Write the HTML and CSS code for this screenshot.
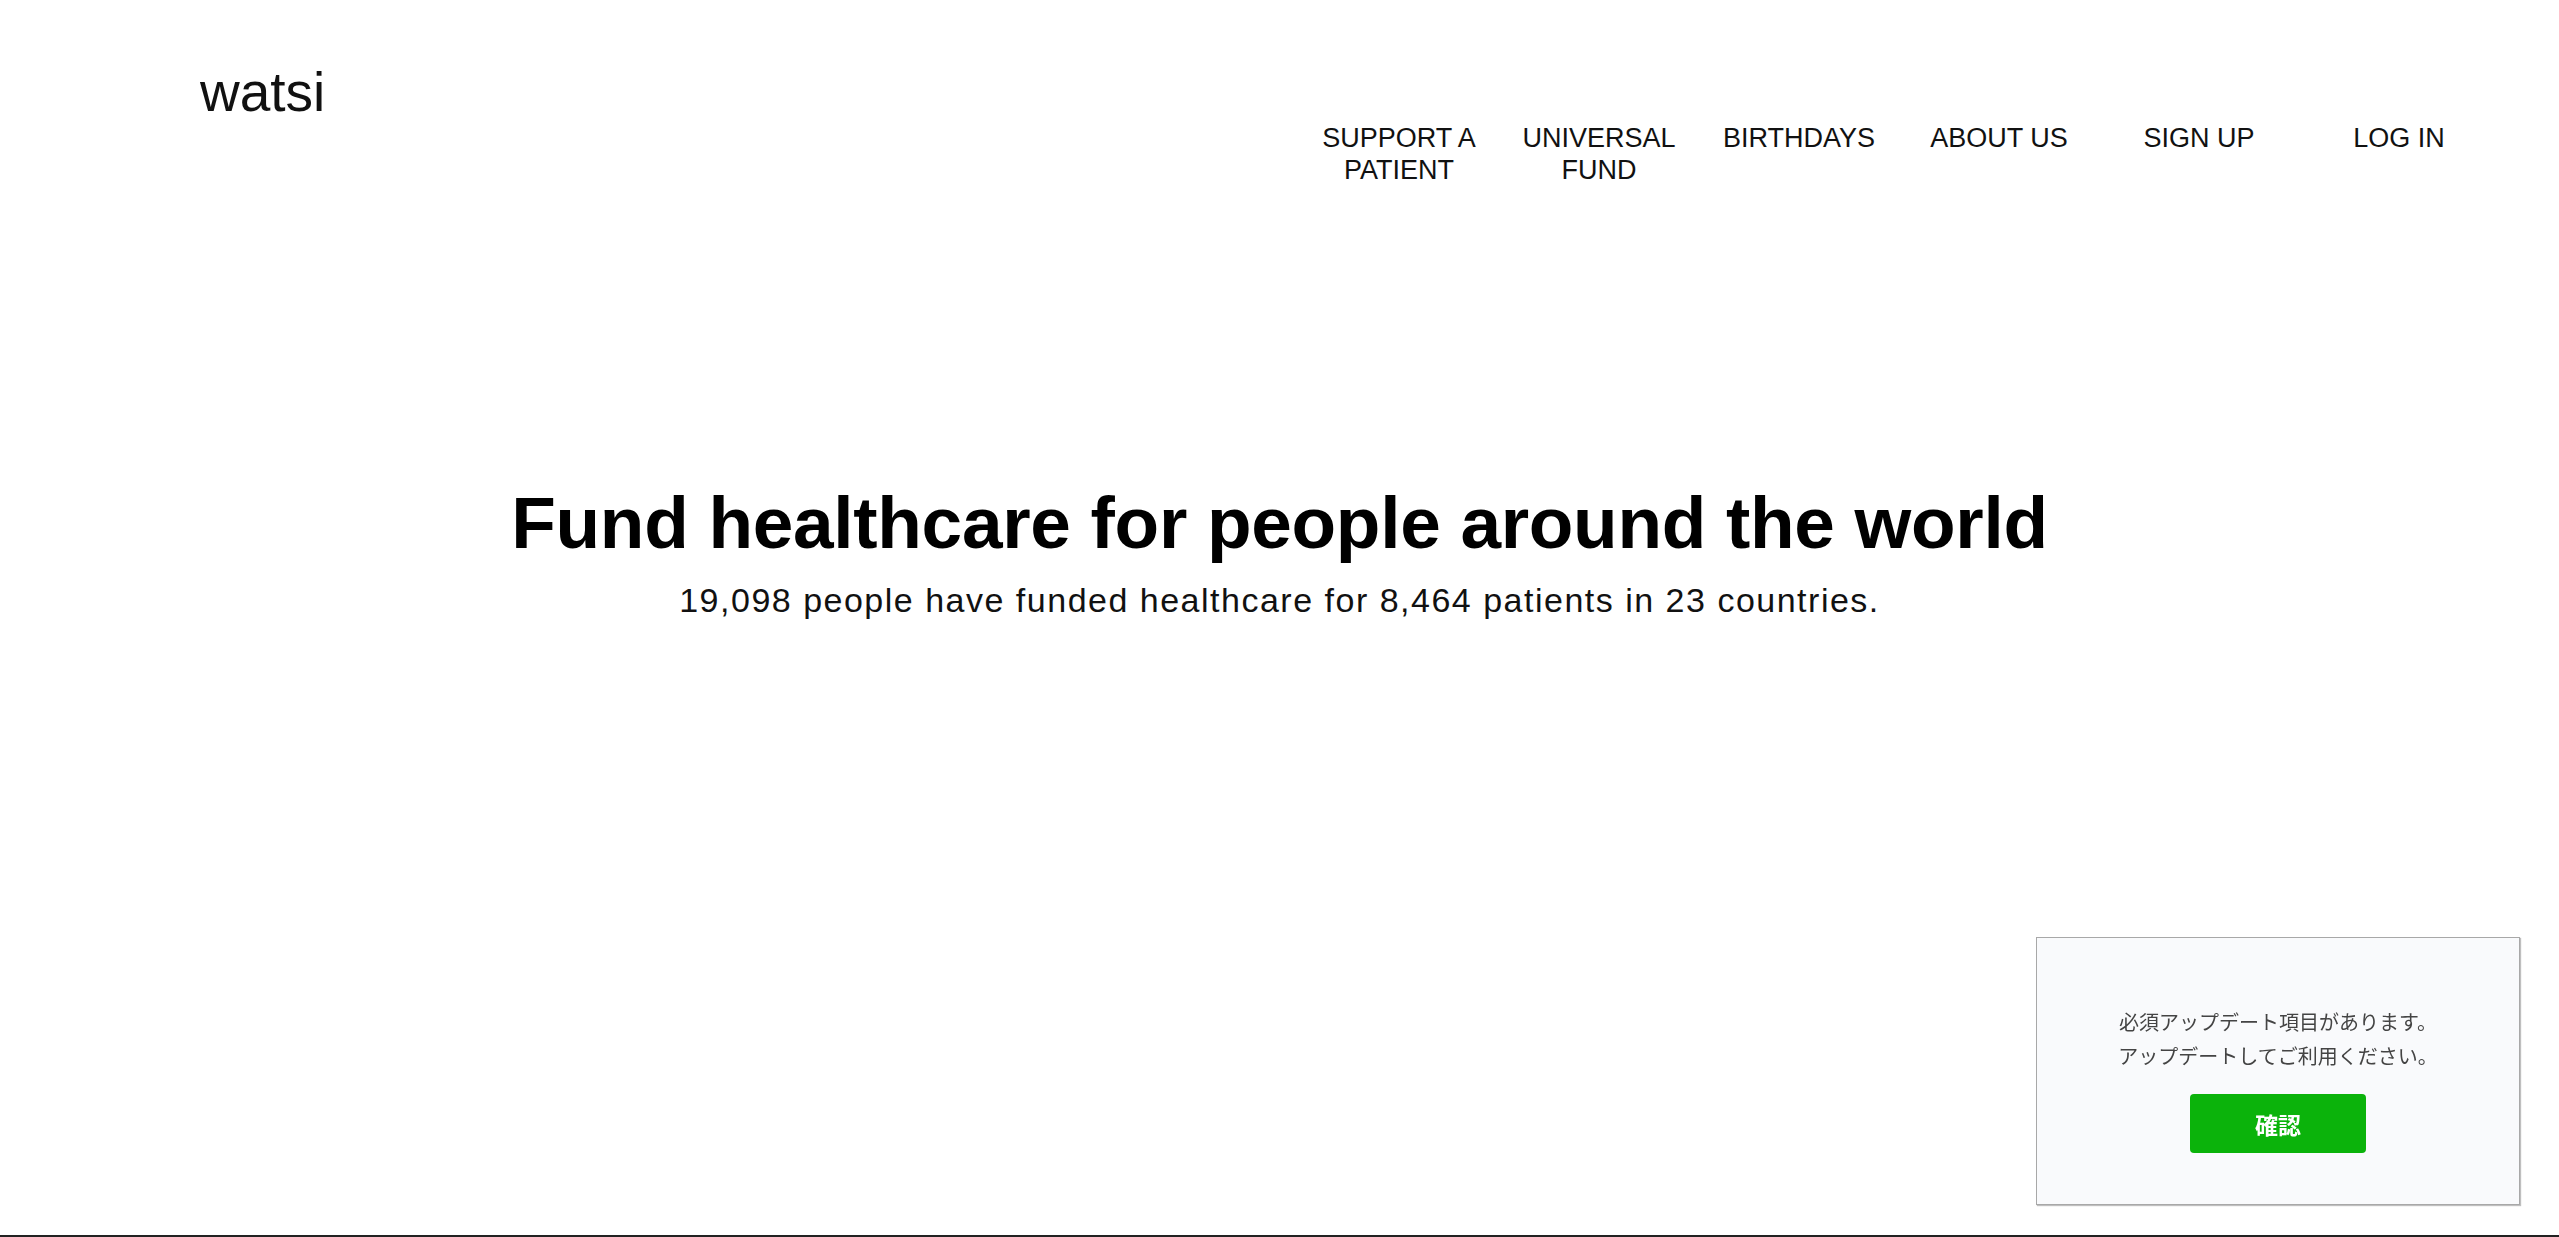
FILE: index.html
```html
<!DOCTYPE html>
<html lang="en">
<head>
<meta charset="utf-8">
<title>Watsi</title>
<link rel="stylesheet" href="styles.css">
</head>
<body>
<div class="top">
  <header class="header">
    <a class="logo" href="#">watsi</a>
    <nav class="nav">
      <a class="nav-item" href="#">SUPPORT A PATIENT</a>
      <a class="nav-item" href="#">UNIVERSAL FUND</a>
      <a class="nav-item" href="#">BIRTHDAYS</a>
      <a class="nav-item" href="#">ABOUT US</a>
      <a class="nav-item" href="#">SIGN UP</a>
      <a class="nav-item" href="#">LOG IN</a>
    </nav>
  </header>
  <section class="hero">
    <h1 class="hero-title">Fund healthcare for people around the world</h1>
    <p class="hero-sub">19,098 people have funded healthcare for 8,464 patients in 23 countries.</p>
  </section>
</div>
<section class="dark"></section>

<div class="update-box">
  <p class="update-text">必須アップデート項目があります。<br>アップデートしてご利用ください。</p>
  <button class="update-btn" type="button">確認</button>
</div>
</body>
</html>
```
FILE: styles.css
```css
html, body {
  margin: 0;
  padding: 0;
  background: #ffffff;
}
body {
  font-family: "Liberation Sans", Arial, sans-serif;
  color: #111111;
}
.top {
  height: 1235px;
  box-sizing: border-box;
}
.header {
  display: flex;
  justify-content: space-between;
  align-items: flex-start;
  padding: 66px 60px 0 200px;
}
.logo {
  font-size: 55px;
  line-height: 52px;
  color: #111111;
  text-decoration: none;
}
.nav {
  display: flex;
  padding-top: 56px;
}
.nav-item {
  width: 200px;
  box-sizing: border-box;
  padding: 0 10px;
  text-align: center;
  font-size: 27px;
  line-height: 32px;
  color: #111111;
  text-decoration: none;
}
.hero {
  padding-top: 293px;
  text-align: center;
}
.hero-title {
  margin: 0;
  font-size: 73px;
  line-height: 1.2;
  font-weight: bold;
  letter-spacing: -0.3px;
  color: #000000;
}
.hero-sub {
  margin: 13px 0 0;
  font-size: 34px;
  line-height: 1.2;
  letter-spacing: 1.5px;
  color: #111111;
}
.dark {
  height: 400px;
  background: #222222;
}
.update-box {
  position: fixed;
  right: 39px;
  bottom: 32px;
  width: 484px;
  box-sizing: border-box;
  padding: 67px 0 51px;
  background: #f9fafc;
  border: 1px solid #a8a8a8;
  box-shadow: 1px 1px 1px rgba(0, 0, 0, 0.25);
  display: flex;
  flex-direction: column;
  align-items: center;
  font-family: "Noto Sans CJK JP", "Noto Sans", sans-serif;
}
.update-text {
  margin: 0;
  font-size: 20px;
  line-height: 34px;
  color: #444444;
  text-align: center;
}
.update-btn {
  margin-top: 21px;
  width: 176px;
  height: 59px;
  border: none;
  border-radius: 4px;
  background: #0bb30b;
  color: #ffffff;
  font-family: "Noto Sans CJK JP", sans-serif;
  font-size: 23px;
  font-weight: bold;
}
```
